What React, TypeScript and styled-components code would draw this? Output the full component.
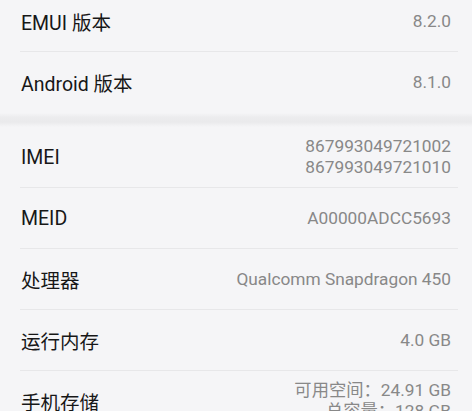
import { FC } from 'react';
import styled, { createGlobalStyle } from 'styled-components';

interface InfoItem {
  label: string;
  values: string[];
}

const GlobalStyle = createGlobalStyle`
  html, body {
    margin: 0;
    padding: 0;
    background: #f5f5f7;
    overflow: hidden;
  }
  body {
    font-family: Roboto, "Noto Sans CJK SC", sans-serif;
  }
`;

const Screen = styled.div`
  width: 472px;
  height: 411px;
  overflow: hidden;
  background: #f5f5f7;
`;

const List = styled.div`
  display: flex;
  flex-direction: column;
`;

const FirstList = styled(List)`
  margin-top: -9px;
`;

const Row = styled.div<{ $divider: boolean }>`
  height: 60px;
  display: flex;
  align-items: center;
  justify-content: space-between;
  margin: 0 14px 0 20px;
  padding: 0 7px 0 1px;
  border-bottom: 1px solid ${(p) => (p.$divider ? '#e7e7e9' : 'transparent')};
`;

const Label = styled.div`
  font-size: 19.5px;
  color: #171717;
`;

const Values = styled.div`
  display: flex;
  flex-direction: column;
  align-items: flex-end;
  font-size: 17.3px;
  line-height: 21px;
  color: #888888;
`;

const SectionGap = styled.div`
  height: 14px;
  background: linear-gradient(#f5f5f7 0%, #ececee 30%, #eaeaec 65%, #f5f5f7 100%);
`;

const firstGroup: InfoItem[] = [
  { label: 'EMUI 版本', values: ['8.2.0'] },
  { label: 'Android 版本', values: ['8.1.0'] },
];

const secondGroup: InfoItem[] = [
  { label: 'IMEI', values: ['867993049721002', '867993049721010'] },
  { label: 'MEID', values: ['A00000ADCC5693'] },
  { label: '处理器', values: ['Qualcomm Snapdragon 450'] },
  { label: '运行内存', values: ['4.0 GB'] },
  { label: '手机存储', values: ['可用空间：24.91 GB', '总容量：128 GB'] },
];

const InfoRows: FC<{ items: InfoItem[] }> = ({ items }) => (
  <>
    {items.map((item, i) => (
      <Row key={item.label} $divider={i < items.length - 1}>
        <Label>{item.label}</Label>
        <Values>
          {item.values.map((v) => (
            <span key={v}>{v}</span>
          ))}
        </Values>
      </Row>
    ))}
  </>
);

const App: FC = () => (
  <Screen>
    <GlobalStyle />
    <FirstList>
      <InfoRows items={firstGroup} />
    </FirstList>
    <SectionGap />
    <List>
      <InfoRows items={secondGroup} />
    </List>
  </Screen>
);

export default App;
